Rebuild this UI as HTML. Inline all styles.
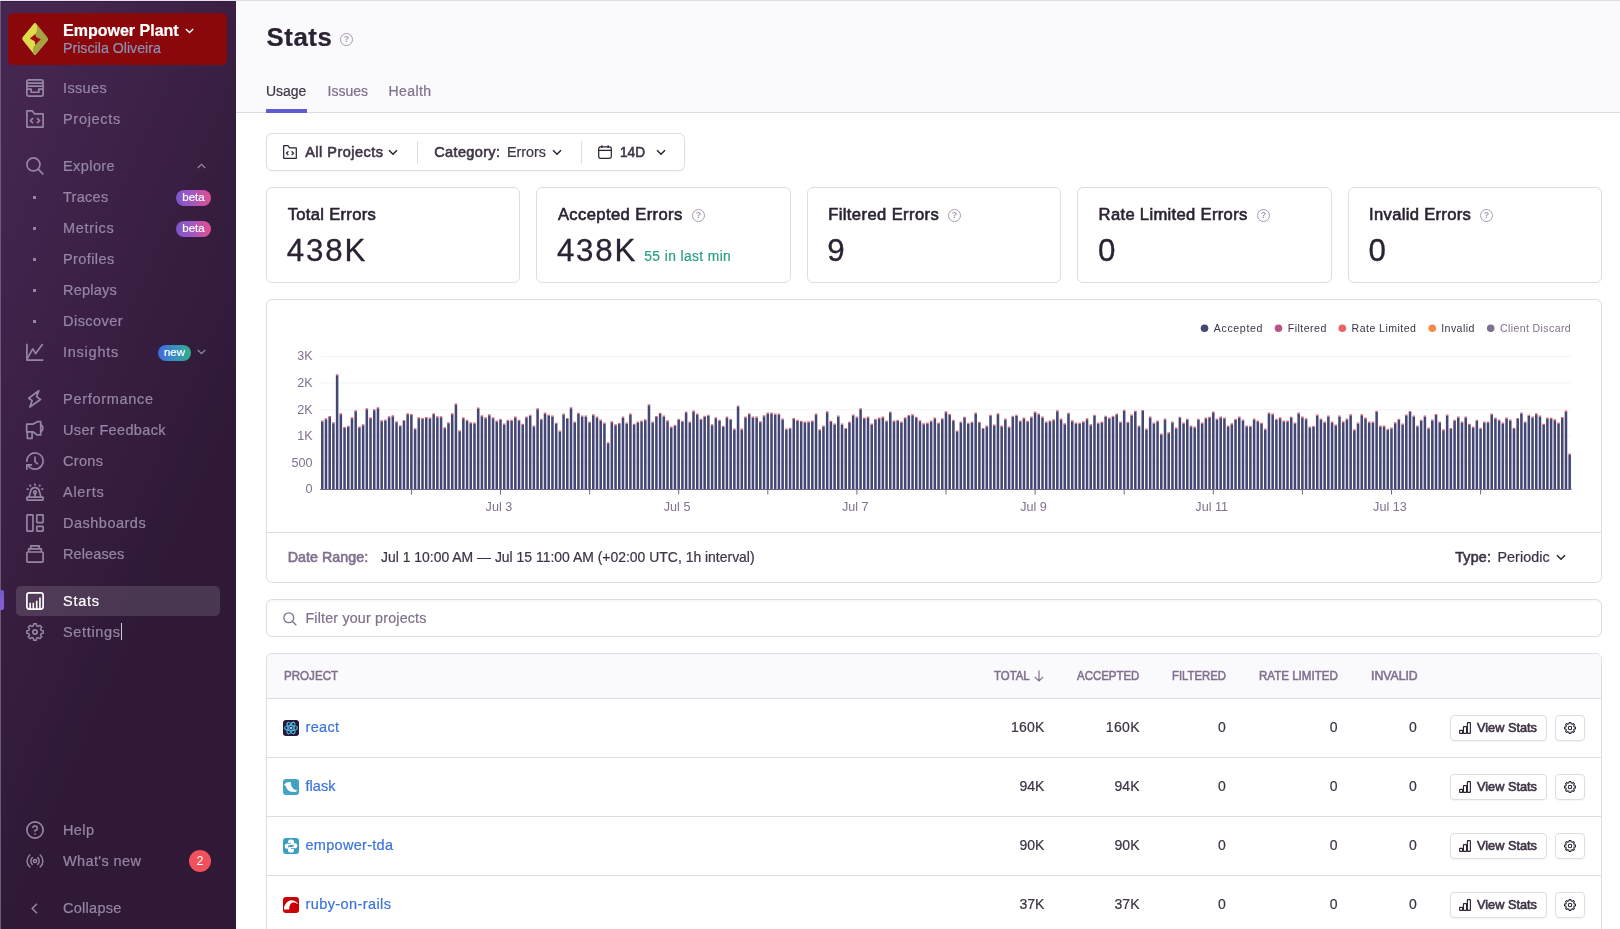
<!DOCTYPE html>
<html lang="en">
<head>
<meta charset="utf-8">
<title>Stats — Empower Plant — Sentry</title>
<style>
*{box-sizing:border-box;margin:0;padding:0}
html,body{width:1620px;height:929px;overflow:hidden;background:#fff}
body{font-family:"Liberation Sans",sans-serif;color:#3e3446;font-size:15px;position:relative;-webkit-font-smoothing:antialiased}
a{text-decoration:none;color:inherit}
#main,#sidebar{will-change:transform}
.abs{position:absolute}
.t{position:absolute;white-space:nowrap;line-height:1;transform-origin:0 50%}
svg{display:block;overflow:visible}
/* sidebar */
#sidebar{position:absolute;left:0;top:0;width:236px;height:929px;background:linear-gradient(294.17deg,#2f1937 35.57%,#452650 92.42%);color:#9586a5}
#sidebar .edge{position:absolute;left:0;top:0;width:1px;height:929px;background:#6d5a7a}
#sidebar .org{position:absolute;left:8px;top:13px;width:219px;height:52px;border-radius:5px;background:#8a080b}
#sidebar .item{position:absolute;left:16px;width:204px;height:30px}
#sidebar .item .ic{position:absolute;left:10px;top:6px;width:18px;height:18px;color:#9586a5}
#sidebar .item .lb{position:absolute;left:47px;top:0;height:30px;line-height:30px;font-size:15px;white-space:nowrap;color:#9586a5}
#sidebar .item.active{background:rgba(255,255,255,.13);border-radius:5px}
#sidebar .item.active .lb,#sidebar .item.active .ic{color:#fff}
#sidebar .dot{position:absolute;left:17px;top:14px;width:3px;height:3px;background:#9586a5}
.badge{position:absolute;height:16px;border-radius:8px;color:#fff;font-size:11.5px;line-height:15px;text-align:center;-webkit-text-stroke:.2px #fff}
.beta{left:160px;top:8px;width:35px;background:linear-gradient(90deg,#7b56cc 0%,#a058c0 45%,#e1508f 100%)}
.new{left:142px;top:8px;width:33px;background:linear-gradient(90deg,#3e6ae0 0%,#3a8fc0 50%,#33ad8b 100%)}
/* main */
#main{position:absolute;left:236px;top:0;width:1384px;height:929px;background:#fff}
#header{position:absolute;left:0;top:0;width:1384px;height:113px;background:#faf9fb;border-top:1px solid #e0dce5;border-bottom:1px solid #e0dce5}
.panel{position:absolute;background:#fff;border:1px solid #e0dce5;border-radius:6px}
.sub{color:#80708f}
.q{position:absolute;width:13px;height:13px;border:1px solid #a79bb3;border-radius:50%;color:#a79bb3;font-size:9px;line-height:11px;text-align:center;font-weight:bold}
.num{position:absolute;text-align:right;font-size:15px;line-height:1;white-space:nowrap;color:#3e3446}
.th{position:absolute;font-size:12px;font-weight:normal;-webkit-text-stroke:.55px #80708f;color:#80708f;line-height:1;white-space:nowrap;text-align:right}
.btn{position:absolute;height:26px;border:1px solid #e0dce5;border-radius:4px;background:#fff;box-shadow:0 1px 1px rgba(43,34,51,.04)}
/*thick*/.t,.num,#sidebar .item .lb{-webkit-text-stroke:.22px currentColor}
.link{color:#3c74dd}
.sb{font-weight:normal!important;-webkit-text-stroke:.6px currentColor}
#s_issues{letter-spacing:0.36px!important;font-size:14.5px!important;}
#s_projects{letter-spacing:0.69px!important;font-size:14.5px!important;}
#s_explore{letter-spacing:0.42px!important;font-size:14.5px!important;}
#s_traces{letter-spacing:0.28px!important;font-size:14.5px!important;}
#s_metrics{letter-spacing:0.66px!important;font-size:14.5px!important;}
#s_profiles{letter-spacing:0.41px!important;font-size:14.5px!important;}
#s_replays{letter-spacing:0.22px!important;font-size:14.5px!important;}
#s_discover{letter-spacing:0.47px!important;font-size:14.5px!important;}
#s_insights{letter-spacing:0.75px!important;font-size:14.5px!important;}
#s_performance{letter-spacing:0.71px!important;font-size:14.5px!important;}
#s_userfeedback{letter-spacing:0.35px!important;font-size:14.5px!important;}
#s_crons{letter-spacing:0.33px!important;font-size:14.5px!important;}
#s_alerts{letter-spacing:0.72px!important;font-size:14.5px!important;}
#s_dashboards{letter-spacing:0.50px!important;font-size:14.5px!important;}
#s_releases{letter-spacing:0.12px!important;font-size:14.5px!important;}
#s_stats{letter-spacing:0.76px!important;font-size:14.5px!important;}
#s_settings{letter-spacing:0.66px!important;font-size:14.5px!important;}
#s_help{letter-spacing:0.39px!important;font-size:14.5px!important;}
#s_whatsnew{letter-spacing:0.38px!important;font-size:14.5px!important;}
#s_collapse{letter-spacing:0.27px!important;font-size:14.5px!important;}
#orgname{letter-spacing:0!important;transform:scaleX(0.9706);transform-origin:0 50%;font-size:16.5px!important;left:55.3px!important;top:9.3px!important;right:auto!important;}
#username{letter-spacing:0!important;transform:scaleX(0.9798);transform-origin:0 50%;font-size:14.5px!important;left:55.3px!important;top:28.2px!important;right:auto!important;}
#title{letter-spacing:0.60px!important;font-size:25.8px!important;left:30.4px!important;top:23.9px!important;right:auto!important;}
#tab1{letter-spacing:0!important;transform:scaleX(0.9958);transform-origin:0 50%;font-size:14px!important;left:30.4px!important;top:83.1px!important;right:auto!important;}
#tab2{letter-spacing:0.01px!important;font-size:14px!important;left:91.6px!important;top:83.1px!important;right:auto!important;}
#tab3{letter-spacing:0.41px!important;font-size:14px!important;left:152.6px!important;top:83.1px!important;right:auto!important;}
#f1{letter-spacing:0.48px!important;font-size:14.5px!important;left:38.2px!important;top:11.0px!important;right:auto!important;}
#f2{letter-spacing:0.35px!important;font-size:14.5px!important;left:167.3px!important;top:11.0px!important;right:auto!important;}
#f3{letter-spacing:0!important;transform:scaleX(0.9852);transform-origin:0 50%;font-size:14.5px!important;left:239.5px!important;top:11.0px!important;right:auto!important;}
#f4{letter-spacing:0!important;transform:scaleX(0.9395);transform-origin:0 50%;font-size:14.5px!important;left:352.8px!important;top:11.0px!important;right:auto!important;}
#c1{letter-spacing:0.30px!important;font-size:16.6px!important;left:20.7px!important;top:18.6px!important;right:auto!important;}
#c2{letter-spacing:0.39px!important;font-size:16.6px!important;left:20.9px!important;top:18.6px!important;right:auto!important;}
#c3{letter-spacing:0.39px!important;font-size:16.6px!important;left:20.2px!important;top:18.6px!important;right:auto!important;}
#c4{letter-spacing:0.32px!important;font-size:16.6px!important;left:20.6px!important;top:18.6px!important;right:auto!important;}
#c5{letter-spacing:0.31px!important;font-size:16.6px!important;left:20.1px!important;top:18.6px!important;right:auto!important;}
#v1{letter-spacing:1.90px!important;font-size:31.3px!important;left:19.7px!important;top:46.8px!important;right:auto!important;}
#v2{letter-spacing:1.80px!important;font-size:31.3px!important;left:19.9px!important;top:46.8px!important;right:auto!important;}
#v3{letter-spacing:1.39px!important;font-size:31.3px!important;left:19.2px!important;top:46.8px!important;right:auto!important;}
#v4{letter-spacing:2.59px!important;font-size:31.3px!important;left:20.0px!important;top:46.8px!important;right:auto!important;}
#v5{letter-spacing:2.59px!important;font-size:31.3px!important;left:19.5px!important;top:46.8px!important;right:auto!important;}
#v2b{letter-spacing:0.40px!important;font-size:13.8px!important;left:107.3px!important;top:61.6px!important;right:auto!important;}
#dr1{letter-spacing:0.02px!important;font-size:14.3px!important;left:51.7px!important;top:550.0px!important;right:auto!important;}
#dr2{letter-spacing:0!important;transform:scaleX(0.9750);transform-origin:0 50%;font-size:14.3px!important;left:144.8px!important;top:550.0px!important;right:auto!important;}
#ty1{letter-spacing:0.21px!important;font-size:14.3px!important;left:1219.2px!important;top:550.0px!important;right:auto!important;}
#ty2{letter-spacing:0.06px!important;font-size:14.3px!important;left:1261.5px!important;top:550.0px!important;right:auto!important;}
#sr{letter-spacing:0.18px!important;font-size:14.3px!important;left:38.4px!important;top:10.5px!important;right:auto!important;}
#h0{letter-spacing:0!important;transform:scaleX(0.9355);transform-origin:0 50%;font-size:12.4px!important;left:47.5px!important;top:669.5px!important;right:auto!important;}
#h1{letter-spacing:0!important;transform:scaleX(0.9202);transform-origin:0 50%;font-size:12.4px!important;left:757.7px!important;top:669.5px!important;right:auto!important;}
#h2{letter-spacing:0!important;transform:scaleX(0.9232);transform-origin:0 50%;font-size:12.4px!important;left:841.0px!important;top:669.5px!important;right:auto!important;}
#h3{letter-spacing:0!important;transform:scaleX(0.9138);transform-origin:0 50%;font-size:12.4px!important;left:936.4px!important;top:669.5px!important;right:auto!important;}
#h4{letter-spacing:0!important;transform:scaleX(0.9331);transform-origin:0 50%;font-size:12.4px!important;left:1023.2px!important;top:669.5px!important;right:auto!important;}
#h5{letter-spacing:0!important;transform:scaleX(0.9877);transform-origin:0 50%;font-size:12.4px!important;left:1134.9px!important;top:669.5px!important;right:auto!important;}
#p0{letter-spacing:0.34px!important;font-size:14.5px!important;left:69.5px!important;top:720.1px!important;right:auto!important;}
#p1{letter-spacing:0.04px!important;font-size:14.5px!important;left:69.5px!important;top:779.1px!important;right:auto!important;}
#p2{letter-spacing:0.29px!important;font-size:14.5px!important;left:69.5px!important;top:838.1px!important;right:auto!important;}
#p3{letter-spacing:0.41px!important;font-size:14.5px!important;left:69.5px!important;top:897.1px!important;right:auto!important;}
#n1{letter-spacing:0.23px!important;font-size:14px!important;left:775.0px!important;top:720.0px!important;right:auto!important;}
#n2{letter-spacing:0.33px!important;font-size:14px!important;left:869.8px!important;top:720.0px!important;right:auto!important;}
#n3{letter-spacing:0.80px!important;font-size:14px!important;left:982.0px!important;top:720.0px!important;right:auto!important;}
#n4{letter-spacing:0.80px!important;font-size:14px!important;left:1093.8px!important;top:720.0px!important;right:auto!important;}
#n5{letter-spacing:0.80px!important;font-size:14px!important;left:1172.9px!important;top:720.0px!important;right:auto!important;}
#vs1{letter-spacing:0!important;transform:scaleX(0.9961);transform-origin:0 50%;font-size:12.8px!important;left:26.4px!important;top:5.8px!important;right:auto!important;}
#n6{letter-spacing:0.04px!important;font-size:14px!important;left:783.4px!important;top:779.0px!important;right:auto!important;}
#n7{letter-spacing:0.04px!important;font-size:14px!important;left:878.5px!important;top:779.0px!important;right:auto!important;}
#n8{letter-spacing:0.80px!important;font-size:14px!important;left:982.0px!important;top:779.0px!important;right:auto!important;}
#n9{letter-spacing:0.80px!important;font-size:14px!important;left:1093.8px!important;top:779.0px!important;right:auto!important;}
#n10{letter-spacing:0.80px!important;font-size:14px!important;left:1172.9px!important;top:779.0px!important;right:auto!important;}
#vs2{letter-spacing:0!important;transform:scaleX(0.9961);transform-origin:0 50%;font-size:12.8px!important;left:26.4px!important;top:5.8px!important;right:auto!important;}
#n11{letter-spacing:0.04px!important;font-size:14px!important;left:783.4px!important;top:838.0px!important;right:auto!important;}
#n12{letter-spacing:0.04px!important;font-size:14px!important;left:878.5px!important;top:838.0px!important;right:auto!important;}
#n13{letter-spacing:0.80px!important;font-size:14px!important;left:982.0px!important;top:838.0px!important;right:auto!important;}
#n14{letter-spacing:0.80px!important;font-size:14px!important;left:1093.8px!important;top:838.0px!important;right:auto!important;}
#n15{letter-spacing:0.80px!important;font-size:14px!important;left:1172.9px!important;top:838.0px!important;right:auto!important;}
#vs3{letter-spacing:0!important;transform:scaleX(0.9961);transform-origin:0 50%;font-size:12.8px!important;left:26.4px!important;top:5.8px!important;right:auto!important;}
#n16{letter-spacing:0.04px!important;font-size:14px!important;left:783.4px!important;top:897.0px!important;right:auto!important;}
#n17{letter-spacing:0.04px!important;font-size:14px!important;left:878.5px!important;top:897.0px!important;right:auto!important;}
#n18{letter-spacing:0.80px!important;font-size:14px!important;left:982.0px!important;top:897.0px!important;right:auto!important;}
#n19{letter-spacing:0.80px!important;font-size:14px!important;left:1093.8px!important;top:897.0px!important;right:auto!important;}
#n20{letter-spacing:0.80px!important;font-size:14px!important;left:1172.9px!important;top:897.0px!important;right:auto!important;}
#vs4{letter-spacing:0!important;transform:scaleX(0.9961);transform-origin:0 50%;font-size:12.8px!important;left:26.4px!important;top:5.8px!important;right:auto!important;}

</style>
</head>
<body>
<nav id="sidebar">
  <div class="edge"></div>
  <div class="abs" style="left:0;top:0;width:236px;height:1px;background:#e6e2ea"></div>
  <div class="abs" style="left:1px;top:1px;width:235px;height:1px;background:#3a1b48"></div>
  <div class="org">
    <svg class="abs" style="left:6px;top:3px" width="50" height="46" viewBox="0 0 50 46"><clipPath id="lg"><path d="M20.22 7.34Q21.04 6.37 21.85 7.39L33.17 21.59Q34.52 23.28 33.17 24.90L21.85 38.45Q21.04 39.42 20.22 38.41L8.82 24.20Q7.46 22.51 8.82 20.90Z"/></clipPath><path d="M20.22 7.34Q21.04 6.37 21.85 7.39L33.17 21.59Q34.52 23.28 33.17 24.90L21.85 38.45Q21.04 39.42 20.22 38.41L8.82 24.20Q7.46 22.51 8.82 20.90Z" fill="#dfdc4b"/><path d="M23.02 8.42L36.63 19.80L36.63 27.72L21.04 41.58L19.06 37.62L19.06 31.68L21.29 28.96L26.98 23.27L22.28 21.04L21.29 18.07L23.02 14.85Z" fill="#a4a444" clip-path="url(#lg)"/><path d="M21.29 18.07L15.84 22.52L20.69 25.15L21.29 28.96L26.98 23.27L22.28 21.04Z" fill="#a20c10"/></svg>
    <span class="t" id="orgname" style="left:55px;top:9px;font-size:16.5px;font-weight:bold;color:#fff">Empower Plant</span>
    <svg class="abs" style="left:177px;top:15px" width="9" height="6" viewBox="0 0 9 6"><path d="M0.8 1 L4.5 4.6 L8.2 1" fill="none" stroke="#fff" stroke-width="1.4"/></svg>
    <span class="t" id="username" style="left:55px;top:28px;font-size:14.5px;color:#8d90b5">Priscila Oliveira</span>
  </div>

  <a class="item" style="top:73px"><svg class="ic" viewBox="0 0 16 16" fill="none" stroke="currentColor" stroke-width="1.5" stroke-linejoin="round"><rect x=".8" y=".8" width="14.4" height="14.4" rx="1.6"/><path d="M.8 3.6H15.2M.8 6.3H15.2M.8 9H4.6V11.8H11.4V9H15.2"/></svg><span class="lb" id="s_issues">Issues</span></a>
  <a class="item" style="top:104px"><svg class="ic" viewBox="0 0 16 16" fill="none" stroke="currentColor" stroke-width="1.5" stroke-linejoin="round"><path d="M.8 15.2V.8H5.6L7.6 3.4H15.2V15.2Z"/><path d="M6.2 7.2L4 9.4L6.2 11.6M9.8 7.2L12 9.4L9.8 11.6"/></svg><span class="lb" id="s_projects">Projects</span></a>

  <a class="item" style="top:151px"><svg class="ic" viewBox="0 0 16 16" fill="none" stroke="currentColor" stroke-width="1.5"><circle cx="6.6" cy="6.6" r="5.8"/><path d="M10.8 10.8L15.4 15.4"/></svg><span class="lb" id="s_explore">Explore</span>
    <svg class="abs" style="left:181px;top:12px" width="9" height="6" viewBox="0 0 9 6"><path d="M0.8 5 L4.5 1.4 L8.2 5" fill="none" stroke="#9586a5" stroke-width="1.3"/></svg></a>
  <a class="item" style="top:182px"><i class="dot"></i><span class="lb" id="s_traces">Traces</span><span class="badge beta">beta</span></a>
  <a class="item" style="top:213px"><i class="dot"></i><span class="lb" id="s_metrics">Metrics</span><span class="badge beta">beta</span></a>
  <a class="item" style="top:244px"><i class="dot"></i><span class="lb" id="s_profiles">Profiles</span></a>
  <a class="item" style="top:275px"><i class="dot"></i><span class="lb" id="s_replays">Replays</span></a>
  <a class="item" style="top:306px"><i class="dot"></i><span class="lb" id="s_discover">Discover</span></a>
  <a class="item" style="top:337px"><svg class="ic" viewBox="0 0 16 16" fill="none" stroke="currentColor" stroke-width="1.5" stroke-linejoin="round"><path d="M.8 .6V15.2H15.4"/><path d="M1 14L6 5.2L8.6 9.4L14.8 .8"/></svg><span class="lb" id="s_insights">Insights</span><span class="badge new">new</span>
    <svg class="abs" style="left:181px;top:12px" width="9" height="6" viewBox="0 0 9 6"><path d="M0.8 1 L4.5 4.6 L8.2 1" fill="none" stroke="#9586a5" stroke-width="1.3"/></svg></a>

  <a class="item" style="top:384px"><svg class="ic" viewBox="0 0 16 16" fill="none" stroke="currentColor" stroke-width="1.5" stroke-linejoin="round"><path d="M11.4 .7L2.4 7.3L5.5 9.4L3.4 15.1L12.9 8.4L9.4 5.9Z"/></svg><span class="lb" id="s_performance">Performance</span></a>
  <a class="item" style="top:415px"><svg class="ic" viewBox="0 0 16 16" fill="none" stroke="currentColor" stroke-width="1.5" stroke-linejoin="round"><path d="M.6 2.8H6.1L10 .6H13.1V12.4H10L6.1 9.6H.6Z"/><path d="M1.2 9.6V15.4H5.4V9.6"/><path d="M13.1 3.6A3 3 0 0 1 13.1 9.2C15.6 8.4 15.6 4.4 13.1 3.6"/></svg><span class="lb" id="s_userfeedback">User Feedback</span></a>
  <a class="item" style="top:446px"><svg class="ic" viewBox="0 0 16 16" fill="none" stroke="currentColor" stroke-width="1.5" stroke-linejoin="round"><path d="M.84 8.8A7.2 7.2 0 1 1 1.65 11.4"/><path d="M5.4 11.4H.7V15.8"/><path d="M8 4V8.6L10.6 10.8"/></svg><span class="lb" id="s_crons">Crons</span></a>
  <a class="item" style="top:477px"><svg class="ic" viewBox="0 0 16 16" fill="none" stroke="currentColor" stroke-width="1.5" stroke-linejoin="round"><rect x=".8" y="12.6" width="14.4" height="2.6" rx=".5"/><path d="M2.6 12.6L4.2 7.2A3.9 3.9 0 0 1 11.8 7.2L13.4 12.6"/><circle cx="8" cy="8.2" r="1.2"/><path d="M8 9.4V12.4M8 .4V2.4M3.2 1.6L4.4 3.2M12.8 1.6L11.6 3.2M.6 5.4H2.4M13.6 5.4H15.4"/></svg><span class="lb" id="s_alerts">Alerts</span></a>
  <a class="item" style="top:508px"><svg class="ic" viewBox="0 0 16 16" fill="none" stroke="currentColor" stroke-width="1.5" stroke-linejoin="round"><rect x=".8" y=".8" width="5.4" height="14.4" rx=".5"/><rect x="9.6" y=".8" width="5.6" height="6.8" rx=".5"/><rect x="9.6" y="11" width="5.6" height="4.2" rx=".5"/></svg><span class="lb" id="s_dashboards">Dashboards</span></a>
  <a class="item" style="top:539px"><svg class="ic" viewBox="0 0 16 16" fill="none" stroke="currentColor" stroke-width="1.5" stroke-linejoin="round"><rect x=".8" y="6.2" width="14.4" height="9" rx="1"/><path d="M2.4 6.2V3.4H13.6V6.2M4.2 3.4V.8H11.8V3.4"/></svg><span class="lb" id="s_releases">Releases</span></a>

  <div class="abs" style="left:0;top:590px;width:4px;height:20px;background:linear-gradient(180deg,#6c5fc7,#8e5bd6);border-radius:0 2px 2px 0"></div>
  <a class="item active" style="top:586px"><svg class="ic" viewBox="0 0 16 16" fill="none" stroke="currentColor" stroke-width="1.5" stroke-linejoin="round"><rect x=".8" y=".8" width="14.4" height="14.4" rx="2"/><path d="M3.7 15V9.6M6.5 15V9.6M9.5 15V7.8M12.4 15V4.9" stroke-width="1.45"/></svg><span class="lb" id="s_stats">Stats</span></a>
  <a class="item" style="top:617px"><svg class="ic" viewBox="0 0 16 16" fill="none" stroke="currentColor" stroke-width="1.3" stroke-linejoin="round"><path d="M13.53 6.63 L15.30 6.79 L15.30 9.21 L13.53 9.37 L12.88 10.94 L14.02 12.30 L12.30 14.02 L10.94 12.88 L9.37 13.53 L9.21 15.30 L6.79 15.30 L6.63 13.53 L5.06 12.88 L3.70 14.02 L1.98 12.30 L3.12 10.94 L2.47 9.37 L0.70 9.21 L0.70 6.79 L2.47 6.63 L3.12 5.06 L1.98 3.70 L3.70 1.98 L5.06 3.12 L6.63 2.47 L6.79 0.70 L9.21 0.70 L9.37 2.47 L10.94 3.12 L12.30 1.98 L14.02 3.70 L12.88 5.06 Z"/><circle cx="8" cy="8" r="1.9" stroke-width="1.5"/></svg><span class="lb" id="s_settings">Settings</span><i class="abs" style="left:105px;top:6px;width:1px;height:17px;background:#cfc6da"></i></a>

  <a class="item" style="top:815px"><svg class="ic" viewBox="0 0 16 16" fill="none" stroke="currentColor" stroke-width="1.5"><circle cx="8" cy="8" r="7.2"/><path d="M6 6.3A2 2 0 1 1 8 8.4V9.6" stroke-width="1.3"/><circle cx="8" cy="11.6" r=".5" fill="currentColor" stroke-width=".6"/></svg><span class="lb" id="s_help">Help</span></a>
  <a class="item" style="top:846px"><svg class="ic" viewBox="0 0 16 16" fill="none" stroke="currentColor" stroke-width="1.3" stroke-linecap="round"><circle cx="8" cy="8" r="1.4"/><path d="M5.6 5A4 4 0 0 0 5.6 11M10.4 5A4 4 0 0 1 10.4 11M3.4 2.6A7.2 7.2 0 0 0 3.4 13.4M12.6 2.6A7.2 7.2 0 0 1 12.6 13.4"/></svg><span class="lb" id="s_whatsnew">What's new</span>
    <span class="abs" style="left:173px;top:4px;width:22px;height:22px;border-radius:50%;background:#f1515c;color:#fff;font-size:12.5px;line-height:22px;text-align:center">2</span></a>
  <a class="item" style="top:893px"><svg class="abs" style="left:15px;top:10px" width="7" height="11" viewBox="0 0 7 11"><path d="M6 .8L1.2 5.5L6 10.2" fill="none" stroke="#9586a5" stroke-width="1.5"/></svg><span class="lb" id="s_collapse">Collapse</span></a>
</nav>
<main id="main">
  <header id="header">
    <h1 class="t" id="title" style="left:30px;top:23px;font-size:26px;font-weight:bold;color:#2b2233;letter-spacing:.4px">Stats</h1>
    <span class="q" style="left:104px;top:32px">?</span>
    <span class="t" id="tab1" style="left:30px;top:83px;font-size:15px;color:#3e3446">Usage</span>
    <span class="t sub" id="tab2" style="left:91px;top:83px;font-size:15px">Issues</span>
    <span class="t sub" id="tab3" style="left:152px;top:83px;font-size:15px">Health</span>
    <div class="abs" style="left:30px;top:108px;width:41px;height:4px;background:#5f5bd3"></div>
  </header>

  <!-- page filters -->
  <div class="panel" style="left:30px;top:133px;width:419px;height:38px;box-shadow:0 1px 2px rgba(43,34,51,.04)">
    <svg class="abs" style="left:16px;top:11px" width="14" height="14" viewBox="0 0 16 16" fill="none" stroke="#2b2233" stroke-width="1.4" stroke-linejoin="round"><path d="M.8 15.2V.8H5.6L7.6 3.4H15.2V15.2Z"/><path d="M6.2 7.2L4 9.4L6.2 11.6M9.8 7.2L12 9.4L9.8 11.6"/></svg>
    <span class="t sb" id="f1" style="left:38px;top:11px;font-size:15px;font-weight:bold">All Projects</span>
    <svg class="abs" style="left:121px;top:15px" width="10" height="7" viewBox="0 0 10 7"><path d="M1 1.2L5 5.2L9 1.2" fill="none" stroke="#2b2233" stroke-width="1.5"/></svg>
    <i class="abs" style="left:150px;top:7px;width:1px;height:23px;background:#e0dce5"></i>
    <span class="t sb" id="f2" style="left:167px;top:11px;font-size:15px;font-weight:bold">Category:</span>
    <span class="t" id="f3" style="left:239px;top:11px;font-size:15px">Errors</span>
    <svg class="abs" style="left:285px;top:15px" width="10" height="7" viewBox="0 0 10 7"><path d="M1 1.2L5 5.2L9 1.2" fill="none" stroke="#2b2233" stroke-width="1.5"/></svg>
    <i class="abs" style="left:314px;top:7px;width:1px;height:23px;background:#e0dce5"></i>
    <svg class="abs" style="left:331px;top:11px" width="14" height="14" viewBox="0 0 16 16" fill="none" stroke="#2b2233" stroke-width="1.4" stroke-linejoin="round"><rect x=".8" y="2.2" width="14.4" height="13" rx="2"/><path d="M.8 6.2H15.2M4.4 .4V3.4M11.6 .4V3.4"/></svg>
    <span class="t sb" id="f4" style="left:353px;top:11px;font-size:15px;font-weight:bold">14D</span>
    <svg class="abs" style="left:389px;top:15px" width="10" height="7" viewBox="0 0 10 7"><path d="M1 1.2L5 5.2L9 1.2" fill="none" stroke="#2b2233" stroke-width="1.5"/></svg>
  </div>

  <!-- score cards -->
  <section class="panel" style="left:30px;top:187px;width:254px;height:96px">
    <span class="t sb" id="c1" style="color:#2b2233;left:20px;top:19px;font-size:16.5px;font-weight:bold">Total Errors</span>
    <span class="t" id="v1" style="color:#2b2233;-webkit-text-stroke:.3px #2b2233;left:19px;top:46px;font-size:32px;letter-spacing:1px">438K</span>
  </section>
  <section class="panel" style="left:300px;top:187px;width:255px;height:96px">
    <span class="t sb" id="c2" style="color:#2b2233;left:20px;top:19px;font-size:16.5px;font-weight:bold">Accepted Errors</span>
    <span class="q" style="left:155px;top:21px">?</span>
    <span class="t" id="v2" style="color:#2b2233;-webkit-text-stroke:.3px #2b2233;left:19px;top:46px;font-size:32px;letter-spacing:1px">438K</span>
    <span class="t" id="v2b" style="left:107px;top:62px;font-size:14.5px;color:#2ba185">55 in last min</span>
  </section>
  <section class="panel" style="left:571px;top:187px;width:254px;height:96px">
    <span class="t sb" id="c3" style="color:#2b2233;left:20px;top:19px;font-size:16.5px;font-weight:bold">Filtered Errors</span>
    <span class="q" style="left:140px;top:21px">?</span>
    <span class="t" id="v3" style="color:#2b2233;-webkit-text-stroke:.3px #2b2233;left:19px;top:46px;font-size:32px">9</span>
  </section>
  <section class="panel" style="left:841px;top:187px;width:255px;height:96px">
    <span class="t sb" id="c4" style="color:#2b2233;left:20px;top:19px;font-size:16.5px;font-weight:bold">Rate Limited Errors</span>
    <span class="q" style="left:179px;top:21px">?</span>
    <span class="t" id="v4" style="color:#2b2233;-webkit-text-stroke:.3px #2b2233;left:19px;top:46px;font-size:32px">0</span>
  </section>
  <section class="panel" style="left:1112px;top:187px;width:254px;height:96px">
    <span class="t sb" id="c5" style="color:#2b2233;left:20px;top:19px;font-size:16.5px;font-weight:bold">Invalid Errors</span>
    <span class="q" style="left:131px;top:21px">?</span>
    <span class="t" id="v5" style="color:#2b2233;-webkit-text-stroke:.3px #2b2233;left:19px;top:46px;font-size:32px">0</span>
  </section>
  <!-- usage chart -->
  <section class="panel" style="left:30px;top:299px;width:1336px;height:284px"></section>
<svg class="abs" id="chart" style="left:30px;top:299px" width="1336" height="233" viewBox="0 0 1336 233" font-family="Liberation Sans, sans-serif">
<line x1="54.5" x2="1305.0" y1="163.9" y2="163.9" stroke="#f5f3f7" stroke-width="1"/>
<line x1="54.5" x2="1305.0" y1="137.3" y2="137.3" stroke="#f5f3f7" stroke-width="1"/>
<line x1="54.5" x2="1305.0" y1="110.7" y2="110.7" stroke="#f5f3f7" stroke-width="1"/>
<line x1="54.5" x2="1305.0" y1="84.1" y2="84.1" stroke="#f5f3f7" stroke-width="1"/>
<line x1="54.5" x2="1305.0" y1="57.5" y2="57.5" stroke="#f5f3f7" stroke-width="1"/>
<text x="46.6" y="194.3" text-anchor="end" font-size="12.6" fill="#80708f">0</text>
<text x="46.6" y="167.7" text-anchor="end" font-size="12.6" fill="#80708f">500</text>
<text x="46.6" y="141.1" text-anchor="end" font-size="12.6" fill="#80708f">1K</text>
<text x="46.6" y="114.5" text-anchor="end" font-size="12.6" fill="#80708f">2K</text>
<text x="46.6" y="87.9" text-anchor="end" font-size="12.6" fill="#80708f">2K</text>
<text x="46.6" y="61.3" text-anchor="end" font-size="12.6" fill="#80708f">3K</text>
<path d="M55.00 190.50V122.56h2.55V190.50ZM58.71 190.50V120.24h2.55V190.50ZM62.42 190.50V118.11h2.55V190.50ZM66.14 190.50V124.22h2.55V190.50ZM69.85 190.50V76.26h2.55V190.50ZM73.56 190.50V115.15h2.55V190.50ZM77.28 190.50V129.04h2.55V190.50ZM80.99 190.50V127.65h2.55V190.50ZM84.70 190.50V119.31h2.55V190.50ZM88.41 190.50V112.37h2.55V190.50ZM92.12 190.50V128.58h2.55V190.50ZM95.84 190.50V126.26h2.55V190.50ZM99.55 190.50V110.33h2.55V190.50ZM103.26 190.50V119.31h2.55V190.50ZM106.97 190.50V111.26h2.55V190.50ZM110.69 190.50V109.32h2.55V190.50ZM114.40 190.50V122.28h2.55V190.50ZM118.11 190.50V121.45h2.55V190.50ZM121.83 190.50V118.21h2.55V190.50ZM125.54 190.50V117.28h2.55V190.50ZM129.25 190.50V123.20h2.55V190.50ZM132.96 190.50V127.19h2.55V190.50ZM136.68 190.50V122.09h2.55V190.50ZM140.39 190.50V115.15h2.55V190.50ZM144.10 190.50V116.07h2.55V190.50ZM147.81 190.50V130.24h2.55V190.50ZM151.52 190.50V119.31h2.55V190.50ZM155.24 190.50V120.06h2.55V190.50ZM158.95 190.50V119.04h2.55V190.50ZM162.66 190.50V119.50h2.55V190.50ZM166.38 190.50V115.15h2.55V190.50ZM170.09 190.50V118.21h2.55V190.50ZM173.80 190.50V118.21h2.55V190.50ZM177.51 190.50V129.22h2.55V190.50ZM181.22 190.50V124.22h2.55V190.50ZM184.94 190.50V115.33h2.55V190.50ZM188.65 190.50V105.43h2.55V190.50ZM192.36 190.50V132.28h2.55V190.50ZM196.07 190.50V119.31h2.55V190.50ZM199.79 190.50V121.63h2.55V190.50ZM203.50 190.50V124.13h2.55V190.50ZM207.21 190.50V124.59h2.55V190.50ZM210.92 190.50V109.59h2.55V190.50ZM214.64 190.50V117.28h2.55V190.50ZM218.35 190.50V119.31h2.55V190.50ZM222.06 190.50V116.26h2.55V190.50ZM225.78 190.50V119.31h2.55V190.50ZM229.49 190.50V122.56h2.55V190.50ZM233.20 190.50V120.70h2.55V190.50ZM236.91 190.50V125.52h2.55V190.50ZM240.62 190.50V121.63h2.55V190.50ZM244.34 190.50V121.63h2.55V190.50ZM248.05 190.50V118.57h2.55V190.50ZM251.76 190.50V121.81h2.55V190.50ZM255.47 190.50V125.80h2.55V190.50ZM259.19 190.50V118.39h2.55V190.50ZM262.90 190.50V116.72h2.55V190.50ZM266.61 190.50V127.46h2.55V190.50ZM270.32 190.50V110.33h2.55V190.50ZM274.04 190.50V120.70h2.55V190.50ZM277.75 190.50V114.41h2.55V190.50ZM281.46 190.50V116.81h2.55V190.50ZM285.17 190.50V117.46h2.55V190.50ZM288.89 190.50V124.87h2.55V190.50ZM292.60 190.50V132.46h2.55V190.50ZM296.31 190.50V115.42h2.55V190.50ZM300.02 190.50V119.96h2.55V190.50ZM303.74 190.50V109.13h2.55V190.50ZM307.45 190.50V123.48h2.55V190.50ZM311.16 190.50V114.68h2.55V190.50ZM314.88 190.50V117.46h2.55V190.50ZM318.59 190.50V117.46h2.55V190.50ZM322.30 190.50V123.48h2.55V190.50ZM326.01 190.50V116.26h2.55V190.50ZM329.72 190.50V118.39h2.55V190.50ZM333.44 190.50V121.45h2.55V190.50ZM337.15 190.50V124.41h2.55V190.50ZM340.86 190.50V144.32h2.55V190.50ZM344.57 190.50V123.30h2.55V190.50ZM348.29 190.50V126.26h2.55V190.50ZM352.00 190.50V125.05h2.55V190.50ZM355.71 190.50V118.39h2.55V190.50ZM359.43 190.50V124.41h2.55V190.50ZM363.14 190.50V115.42h2.55V190.50ZM366.85 190.50V125.80h2.55V190.50ZM370.56 190.50V123.48h2.55V190.50ZM374.27 190.50V122.56h2.55V190.50ZM377.99 190.50V121.16h2.55V190.50ZM381.70 190.50V106.35h2.55V190.50ZM385.41 190.50V123.48h2.55V190.50ZM389.12 190.50V117.92h2.55V190.50ZM392.84 190.50V114.87h2.55V190.50ZM396.55 190.50V117.46h2.55V190.50ZM400.26 190.50V122.37h2.55V190.50ZM403.97 190.50V128.58h2.55V190.50ZM407.69 190.50V126.72h2.55V190.50ZM411.40 190.50V120.70h2.55V190.50ZM415.11 190.50V122.74h2.55V190.50ZM418.82 190.50V113.48h2.55V190.50ZM422.54 190.50V123.48h2.55V190.50ZM426.25 190.50V112.56h2.55V190.50ZM429.96 190.50V115.42h2.55V190.50ZM433.68 190.50V120.70h2.55V190.50ZM437.39 190.50V117.74h2.55V190.50ZM441.10 190.50V116.72h2.55V190.50ZM444.81 190.50V126.26h2.55V190.50ZM448.52 190.50V119.13h2.55V190.50ZM452.24 190.50V121.63h2.55V190.50ZM455.95 190.50V127.65h2.55V190.50ZM459.66 190.50V118.39h2.55V190.50ZM463.38 190.50V120.70h2.55V190.50ZM467.09 190.50V130.43h2.55V190.50ZM470.80 190.50V107.47h2.55V190.50ZM474.51 190.50V130.43h2.55V190.50ZM478.22 190.50V118.39h2.55V190.50ZM481.94 190.50V115.33h2.55V190.50ZM485.65 190.50V118.57h2.55V190.50ZM489.36 190.50V118.39h2.55V190.50ZM493.07 190.50V123.30h2.55V190.50ZM496.79 190.50V117.28h2.55V190.50ZM500.50 190.50V114.41h2.55V190.50ZM504.21 190.50V114.41h2.55V190.50ZM507.93 190.50V115.42h2.55V190.50ZM511.64 190.50V115.42h2.55V190.50ZM515.35 190.50V120.52h2.55V190.50ZM519.06 190.50V130.43h2.55V190.50ZM522.77 190.50V129.69h2.55V190.50ZM526.49 190.50V120.06h2.55V190.50ZM530.20 190.50V121.63h2.55V190.50ZM533.91 190.50V122.83h2.55V190.50ZM537.62 190.50V123.48h2.55V190.50ZM541.34 190.50V123.30h2.55V190.50ZM545.05 190.50V122.56h2.55V190.50ZM548.76 190.50V115.42h2.55V190.50ZM552.47 190.50V131.35h2.55V190.50ZM556.19 190.50V127.46h2.55V190.50ZM559.90 190.50V113.30h2.55V190.50ZM563.61 190.50V122.83h2.55V190.50ZM567.32 190.50V125.52h2.55V190.50ZM571.04 190.50V117.46h2.55V190.50ZM574.75 190.50V125.52h2.55V190.50ZM578.46 190.50V129.96h2.55V190.50ZM582.17 190.50V123.48h2.55V190.50ZM585.89 190.50V116.54h2.55V190.50ZM589.60 190.50V118.39h2.55V190.50ZM593.31 190.50V110.33h2.55V190.50ZM597.02 190.50V119.59h2.55V190.50ZM600.74 190.50V118.39h2.55V190.50ZM604.45 190.50V125.52h2.55V190.50ZM608.16 190.50V120.70h2.55V190.50ZM611.88 190.50V119.59h2.55V190.50ZM615.59 190.50V118.57h2.55V190.50ZM619.30 190.50V122.56h2.55V190.50ZM623.01 190.50V113.48h2.55V190.50ZM626.73 190.50V122.56h2.55V190.50ZM630.44 190.50V121.63h2.55V190.50ZM634.15 190.50V123.48h2.55V190.50ZM637.86 190.50V119.31h2.55V190.50ZM641.57 190.50V117.00h2.55V190.50ZM645.29 190.50V116.26h2.55V190.50ZM649.00 190.50V118.85h2.55V190.50ZM652.71 190.50V122.37h2.55V190.50ZM656.42 190.50V125.34h2.55V190.50ZM660.14 190.50V124.59h2.55V190.50ZM663.85 190.50V122.56h2.55V190.50ZM667.56 190.50V119.59h2.55V190.50ZM671.27 190.50V124.59h2.55V190.50ZM674.99 190.50V120.24h2.55V190.50ZM678.70 190.50V113.30h2.55V190.50ZM682.41 190.50V116.07h2.55V190.50ZM686.12 190.50V121.63h2.55V190.50ZM689.84 190.50V132.55h2.55V190.50ZM693.55 190.50V123.48h2.55V190.50ZM697.26 190.50V118.85h2.55V190.50ZM700.98 190.50V124.69h2.55V190.50ZM704.69 190.50V123.48h2.55V190.50ZM708.40 190.50V114.41h2.55V190.50ZM712.11 190.50V123.66h2.55V190.50ZM715.82 190.50V129.96h2.55V190.50ZM719.54 190.50V127.46h2.55V190.50ZM723.25 190.50V116.72h2.55V190.50ZM726.96 190.50V126.54h2.55V190.50ZM730.67 190.50V115.33h2.55V190.50ZM734.39 190.50V127.46h2.55V190.50ZM738.10 190.50V120.52h2.55V190.50ZM741.81 190.50V128.58h2.55V190.50ZM745.52 190.50V117.74h2.55V190.50ZM749.24 190.50V116.72h2.55V190.50ZM752.95 190.50V122.56h2.55V190.50ZM756.66 190.50V119.59h2.55V190.50ZM760.38 190.50V122.83h2.55V190.50ZM764.09 190.50V118.39h2.55V190.50ZM767.80 190.50V113.57h2.55V190.50ZM771.51 190.50V115.42h2.55V190.50ZM775.23 190.50V118.39h2.55V190.50ZM778.94 190.50V123.48h2.55V190.50ZM782.65 190.50V122.56h2.55V190.50ZM786.36 190.50V121.16h2.55V190.50ZM790.07 190.50V112.37h2.55V190.50ZM793.79 190.50V120.52h2.55V190.50ZM797.50 190.50V125.34h2.55V190.50ZM801.21 190.50V114.68h2.55V190.50ZM804.92 190.50V122.28h2.55V190.50ZM808.64 190.50V124.41h2.55V190.50ZM812.35 190.50V124.87h2.55V190.50ZM816.06 190.50V123.30h2.55V190.50ZM819.77 190.50V120.24h2.55V190.50ZM823.49 190.50V126.26h2.55V190.50ZM827.20 190.50V116.72h2.55V190.50ZM830.91 190.50V124.41h2.55V190.50ZM834.62 190.50V123.48h2.55V190.50ZM838.34 190.50V117.65h2.55V190.50ZM842.05 190.50V119.59h2.55V190.50ZM845.76 190.50V117.74h2.55V190.50ZM849.48 190.50V115.42h2.55V190.50ZM853.19 190.50V123.48h2.55V190.50ZM856.90 190.50V111.63h2.55V190.50ZM860.61 190.50V123.66h2.55V190.50ZM864.32 190.50V116.54h2.55V190.50ZM868.04 190.50V112.83h2.55V190.50ZM871.75 190.50V127.46h2.55V190.50ZM875.46 190.50V111.91h2.55V190.50ZM879.17 190.50V130.43h2.55V190.50ZM882.89 190.50V118.39h2.55V190.50ZM886.60 190.50V124.41h2.55V190.50ZM890.31 190.50V122.56h2.55V190.50ZM894.02 190.50V135.52h2.55V190.50ZM897.74 190.50V120.52h2.55V190.50ZM901.45 190.50V134.13h2.55V190.50ZM905.16 190.50V123.48h2.55V190.50ZM908.88 190.50V129.50h2.55V190.50ZM912.59 190.50V118.67h2.55V190.50ZM916.30 190.50V124.59h2.55V190.50ZM920.01 190.50V120.70h2.55V190.50ZM923.73 190.50V127.46h2.55V190.50ZM927.44 190.50V128.39h2.55V190.50ZM931.15 190.50V120.70h2.55V190.50ZM934.86 190.50V124.59h2.55V190.50ZM938.57 190.50V119.59h2.55V190.50ZM942.29 190.50V118.85h2.55V190.50ZM946.00 190.50V113.57h2.55V190.50ZM949.71 190.50V120.42h2.55V190.50ZM953.42 190.50V118.39h2.55V190.50ZM957.14 190.50V119.59h2.55V190.50ZM960.85 190.50V127.46h2.55V190.50ZM964.56 190.50V125.34h2.55V190.50ZM968.27 190.50V120.70h2.55V190.50ZM971.99 190.50V118.39h2.55V190.50ZM975.70 190.50V121.45h2.55V190.50ZM979.41 190.50V127.46h2.55V190.50ZM983.12 190.50V127.65h2.55V190.50ZM986.84 190.50V120.52h2.55V190.50ZM990.55 190.50V122.56h2.55V190.50ZM994.26 190.50V124.87h2.55V190.50ZM997.98 190.50V130.43h2.55V190.50ZM1001.69 190.50V114.41h2.55V190.50ZM1005.40 190.50V115.42h2.55V190.50ZM1009.11 190.50V120.70h2.55V190.50ZM1012.82 190.50V119.31h2.55V190.50ZM1016.54 190.50V122.56h2.55V190.50ZM1020.25 190.50V122.56h2.55V190.50ZM1023.96 190.50V118.85h2.55V190.50ZM1027.67 190.50V124.59h2.55V190.50ZM1031.39 190.50V114.41h2.55V190.50ZM1035.10 190.50V118.57h2.55V190.50ZM1038.81 190.50V120.24h2.55V190.50ZM1042.53 190.50V128.39h2.55V190.50ZM1046.24 190.50V127.65h2.55V190.50ZM1049.95 190.50V116.54h2.55V190.50ZM1053.66 190.50V120.52h2.55V190.50ZM1057.38 190.50V123.48h2.55V190.50ZM1061.09 190.50V117.46h2.55V190.50ZM1064.80 190.50V123.48h2.55V190.50ZM1068.51 190.50V126.54h2.55V190.50ZM1072.22 190.50V117.46h2.55V190.50ZM1075.94 190.50V123.30h2.55V190.50ZM1079.65 190.50V120.42h2.55V190.50ZM1083.36 190.50V116.35h2.55V190.50ZM1087.08 190.50V131.35h2.55V190.50ZM1090.79 190.50V124.41h2.55V190.50ZM1094.50 190.50V116.35h2.55V190.50ZM1098.21 190.50V119.50h2.55V190.50ZM1101.92 190.50V123.48h2.55V190.50ZM1105.64 190.50V123.48h2.55V190.50ZM1109.35 190.50V112.65h2.55V190.50ZM1113.06 190.50V127.46h2.55V190.50ZM1116.77 190.50V127.46h2.55V190.50ZM1120.49 190.50V130.70h2.55V190.50ZM1124.20 190.50V129.50h2.55V190.50ZM1127.91 190.50V124.22h2.55V190.50ZM1131.62 190.50V120.70h2.55V190.50ZM1135.34 190.50V125.52h2.55V190.50ZM1139.05 190.50V116.54h2.55V190.50ZM1142.76 190.50V113.11h2.55V190.50ZM1146.47 190.50V117.46h2.55V190.50ZM1150.19 190.50V127.46h2.55V190.50ZM1153.90 190.50V121.63h2.55V190.50ZM1157.61 190.50V117.46h2.55V190.50ZM1161.33 190.50V129.50h2.55V190.50ZM1165.04 190.50V121.45h2.55V190.50ZM1168.75 190.50V116.07h2.55V190.50ZM1172.46 190.50V123.48h2.55V190.50ZM1176.17 190.50V131.35h2.55V190.50ZM1179.89 190.50V116.54h2.55V190.50ZM1183.60 190.50V129.96h2.55V190.50ZM1187.31 190.50V121.63h2.55V190.50ZM1191.02 190.50V118.39h2.55V190.50ZM1194.74 190.50V123.48h2.55V190.50ZM1198.45 190.50V118.39h2.55V190.50ZM1202.16 190.50V125.80h2.55V190.50ZM1205.88 190.50V128.39h2.55V190.50ZM1209.59 190.50V121.63h2.55V190.50ZM1213.30 190.50V129.69h2.55V190.50ZM1217.01 190.50V123.48h2.55V190.50ZM1220.72 190.50V123.48h2.55V190.50ZM1224.44 190.50V115.42h2.55V190.50ZM1228.15 190.50V119.50h2.55V190.50ZM1231.86 190.50V121.45h2.55V190.50ZM1235.58 190.50V124.59h2.55V190.50ZM1239.29 190.50V119.59h2.55V190.50ZM1243.00 190.50V121.45h2.55V190.50ZM1246.71 190.50V129.78h2.55V190.50ZM1250.42 190.50V119.96h2.55V190.50ZM1254.14 190.50V114.41h2.55V190.50ZM1257.85 190.50V123.48h2.55V190.50ZM1261.56 190.50V116.72h2.55V190.50ZM1265.27 190.50V118.39h2.55V190.50ZM1268.99 190.50V115.33h2.55V190.50ZM1272.70 190.50V117.46h2.55V190.50ZM1276.41 190.50V125.80h2.55V190.50ZM1280.12 190.50V119.50h2.55V190.50ZM1283.84 190.50V119.78h2.55V190.50ZM1287.55 190.50V121.16h2.55V190.50ZM1291.26 190.50V124.59h2.55V190.50ZM1294.97 190.50V119.04h2.55V190.50ZM1298.69 190.50V112.56h2.55V190.50ZM1302.40 190.50V155.48h2.55V190.50Z" fill="#444674"/>
<path d="M55.00 122.66v-1.1h2.55v1.1ZM58.71 120.34v-1.1h2.55v1.1ZM62.42 118.21v-1.1h2.55v1.1ZM66.14 124.32v-1.1h2.55v1.1ZM69.85 76.36v-1.1h2.55v1.1ZM73.56 115.25v-1.1h2.55v1.1ZM77.28 129.14v-1.1h2.55v1.1ZM80.99 127.75v-1.1h2.55v1.1ZM84.70 119.41v-1.1h2.55v1.1ZM88.41 112.47v-1.1h2.55v1.1ZM92.12 128.68v-1.1h2.55v1.1ZM95.84 126.36v-1.1h2.55v1.1ZM99.55 110.43v-1.1h2.55v1.1ZM103.26 119.41v-1.1h2.55v1.1ZM106.97 111.36v-1.1h2.55v1.1ZM110.69 109.42v-1.1h2.55v1.1ZM114.40 122.38v-1.1h2.55v1.1ZM118.11 121.55v-1.1h2.55v1.1ZM121.83 118.31v-1.1h2.55v1.1ZM125.54 117.38v-1.1h2.55v1.1ZM129.25 123.30v-1.1h2.55v1.1ZM132.96 127.29v-1.1h2.55v1.1ZM136.68 122.19v-1.1h2.55v1.1ZM140.39 115.25v-1.1h2.55v1.1ZM144.10 116.17v-1.1h2.55v1.1ZM147.81 130.34v-1.1h2.55v1.1ZM151.52 119.41v-1.1h2.55v1.1ZM155.24 120.16v-1.1h2.55v1.1ZM158.95 119.14v-1.1h2.55v1.1ZM162.66 119.60v-1.1h2.55v1.1ZM166.38 115.25v-1.1h2.55v1.1ZM170.09 118.31v-1.1h2.55v1.1ZM173.80 118.31v-1.1h2.55v1.1ZM177.51 129.32v-1.1h2.55v1.1ZM181.22 124.32v-1.1h2.55v1.1ZM184.94 115.43v-1.1h2.55v1.1ZM188.65 105.53v-1.1h2.55v1.1ZM192.36 132.38v-1.1h2.55v1.1ZM196.07 119.41v-1.1h2.55v1.1ZM199.79 121.73v-1.1h2.55v1.1ZM203.50 124.23v-1.1h2.55v1.1ZM207.21 124.69v-1.1h2.55v1.1ZM210.92 109.69v-1.1h2.55v1.1ZM214.64 117.38v-1.1h2.55v1.1ZM218.35 119.41v-1.1h2.55v1.1ZM222.06 116.36v-1.1h2.55v1.1ZM225.78 119.41v-1.1h2.55v1.1ZM229.49 122.66v-1.1h2.55v1.1ZM233.20 120.80v-1.1h2.55v1.1ZM236.91 125.62v-1.1h2.55v1.1ZM240.62 121.73v-1.1h2.55v1.1ZM244.34 121.73v-1.1h2.55v1.1ZM248.05 118.67v-1.1h2.55v1.1ZM251.76 121.91v-1.1h2.55v1.1ZM255.47 125.90v-1.1h2.55v1.1ZM259.19 118.49v-1.1h2.55v1.1ZM262.90 116.82v-1.1h2.55v1.1ZM266.61 127.56v-1.1h2.55v1.1ZM270.32 110.43v-1.1h2.55v1.1ZM274.04 120.80v-1.1h2.55v1.1ZM277.75 114.51v-1.1h2.55v1.1ZM281.46 116.91v-1.1h2.55v1.1ZM285.17 117.56v-1.1h2.55v1.1ZM288.89 124.97v-1.1h2.55v1.1ZM292.60 132.56v-1.1h2.55v1.1ZM296.31 115.52v-1.1h2.55v1.1ZM300.02 120.06v-1.1h2.55v1.1ZM303.74 109.23v-1.1h2.55v1.1ZM307.45 123.58v-1.1h2.55v1.1ZM311.16 114.78v-1.1h2.55v1.1ZM314.88 117.56v-1.1h2.55v1.1ZM318.59 117.56v-1.1h2.55v1.1ZM322.30 123.58v-1.1h2.55v1.1ZM326.01 116.36v-1.1h2.55v1.1ZM329.72 118.49v-1.1h2.55v1.1ZM333.44 121.55v-1.1h2.55v1.1ZM337.15 124.51v-1.1h2.55v1.1ZM340.86 144.42v-1.1h2.55v1.1ZM344.57 123.40v-1.1h2.55v1.1ZM348.29 126.36v-1.1h2.55v1.1ZM352.00 125.15v-1.1h2.55v1.1ZM355.71 118.49v-1.1h2.55v1.1ZM359.43 124.51v-1.1h2.55v1.1ZM363.14 115.52v-1.1h2.55v1.1ZM366.85 125.90v-1.1h2.55v1.1ZM370.56 123.58v-1.1h2.55v1.1ZM374.27 122.66v-1.1h2.55v1.1ZM377.99 121.26v-1.1h2.55v1.1ZM381.70 106.45v-1.1h2.55v1.1ZM385.41 123.58v-1.1h2.55v1.1ZM389.12 118.02v-1.1h2.55v1.1ZM392.84 114.97v-1.1h2.55v1.1ZM396.55 117.56v-1.1h2.55v1.1ZM400.26 122.47v-1.1h2.55v1.1ZM403.97 128.68v-1.1h2.55v1.1ZM407.69 126.82v-1.1h2.55v1.1ZM411.40 120.80v-1.1h2.55v1.1ZM415.11 122.84v-1.1h2.55v1.1ZM418.82 113.58v-1.1h2.55v1.1ZM422.54 123.58v-1.1h2.55v1.1ZM426.25 112.66v-1.1h2.55v1.1ZM429.96 115.52v-1.1h2.55v1.1ZM433.68 120.80v-1.1h2.55v1.1ZM437.39 117.84v-1.1h2.55v1.1ZM441.10 116.82v-1.1h2.55v1.1ZM444.81 126.36v-1.1h2.55v1.1ZM448.52 119.23v-1.1h2.55v1.1ZM452.24 121.73v-1.1h2.55v1.1ZM455.95 127.75v-1.1h2.55v1.1ZM459.66 118.49v-1.1h2.55v1.1ZM463.38 120.80v-1.1h2.55v1.1ZM467.09 130.53v-1.1h2.55v1.1ZM470.80 107.57v-1.1h2.55v1.1ZM474.51 130.53v-1.1h2.55v1.1ZM478.22 118.49v-1.1h2.55v1.1ZM481.94 115.43v-1.1h2.55v1.1ZM485.65 118.67v-1.1h2.55v1.1ZM489.36 118.49v-1.1h2.55v1.1ZM493.07 123.40v-1.1h2.55v1.1ZM496.79 117.38v-1.1h2.55v1.1ZM500.50 114.51v-1.1h2.55v1.1ZM504.21 114.51v-1.1h2.55v1.1ZM507.93 115.52v-1.1h2.55v1.1ZM511.64 115.52v-1.1h2.55v1.1ZM515.35 120.62v-1.1h2.55v1.1ZM519.06 130.53v-1.1h2.55v1.1ZM522.77 129.79v-1.1h2.55v1.1ZM526.49 120.16v-1.1h2.55v1.1ZM530.20 121.73v-1.1h2.55v1.1ZM533.91 122.93v-1.1h2.55v1.1ZM537.62 123.58v-1.1h2.55v1.1ZM541.34 123.40v-1.1h2.55v1.1ZM545.05 122.66v-1.1h2.55v1.1ZM548.76 115.52v-1.1h2.55v1.1ZM552.47 131.45v-1.1h2.55v1.1ZM556.19 127.56v-1.1h2.55v1.1ZM559.90 113.40v-1.1h2.55v1.1ZM563.61 122.93v-1.1h2.55v1.1ZM567.32 125.62v-1.1h2.55v1.1ZM571.04 117.56v-1.1h2.55v1.1ZM574.75 125.62v-1.1h2.55v1.1ZM578.46 130.06v-1.1h2.55v1.1ZM582.17 123.58v-1.1h2.55v1.1ZM585.89 116.64v-1.1h2.55v1.1ZM589.60 118.49v-1.1h2.55v1.1ZM593.31 110.43v-1.1h2.55v1.1ZM597.02 119.69v-1.1h2.55v1.1ZM600.74 118.49v-1.1h2.55v1.1ZM604.45 125.62v-1.1h2.55v1.1ZM608.16 120.80v-1.1h2.55v1.1ZM611.88 119.69v-1.1h2.55v1.1ZM615.59 118.67v-1.1h2.55v1.1ZM619.30 122.66v-1.1h2.55v1.1ZM623.01 113.58v-1.1h2.55v1.1ZM626.73 122.66v-1.1h2.55v1.1ZM630.44 121.73v-1.1h2.55v1.1ZM634.15 123.58v-1.1h2.55v1.1ZM637.86 119.41v-1.1h2.55v1.1ZM641.57 117.10v-1.1h2.55v1.1ZM645.29 116.36v-1.1h2.55v1.1ZM649.00 118.95v-1.1h2.55v1.1ZM652.71 122.47v-1.1h2.55v1.1ZM656.42 125.44v-1.1h2.55v1.1ZM660.14 124.69v-1.1h2.55v1.1ZM663.85 122.66v-1.1h2.55v1.1ZM667.56 119.69v-1.1h2.55v1.1ZM671.27 124.69v-1.1h2.55v1.1ZM674.99 120.34v-1.1h2.55v1.1ZM678.70 113.40v-1.1h2.55v1.1ZM682.41 116.17v-1.1h2.55v1.1ZM686.12 121.73v-1.1h2.55v1.1ZM689.84 132.65v-1.1h2.55v1.1ZM693.55 123.58v-1.1h2.55v1.1ZM697.26 118.95v-1.1h2.55v1.1ZM700.98 124.79v-1.1h2.55v1.1ZM704.69 123.58v-1.1h2.55v1.1ZM708.40 114.51v-1.1h2.55v1.1ZM712.11 123.76v-1.1h2.55v1.1ZM715.82 130.06v-1.1h2.55v1.1ZM719.54 127.56v-1.1h2.55v1.1ZM723.25 116.82v-1.1h2.55v1.1ZM726.96 126.64v-1.1h2.55v1.1ZM730.67 115.43v-1.1h2.55v1.1ZM734.39 127.56v-1.1h2.55v1.1ZM738.10 120.62v-1.1h2.55v1.1ZM741.81 128.68v-1.1h2.55v1.1ZM745.52 117.84v-1.1h2.55v1.1ZM749.24 116.82v-1.1h2.55v1.1ZM752.95 122.66v-1.1h2.55v1.1ZM756.66 119.69v-1.1h2.55v1.1ZM760.38 122.93v-1.1h2.55v1.1ZM764.09 118.49v-1.1h2.55v1.1ZM767.80 113.67v-1.1h2.55v1.1ZM771.51 115.52v-1.1h2.55v1.1ZM775.23 118.49v-1.1h2.55v1.1ZM778.94 123.58v-1.1h2.55v1.1ZM782.65 122.66v-1.1h2.55v1.1ZM786.36 121.26v-1.1h2.55v1.1ZM790.07 112.47v-1.1h2.55v1.1ZM793.79 120.62v-1.1h2.55v1.1ZM797.50 125.44v-1.1h2.55v1.1ZM801.21 114.78v-1.1h2.55v1.1ZM804.92 122.38v-1.1h2.55v1.1ZM808.64 124.51v-1.1h2.55v1.1ZM812.35 124.97v-1.1h2.55v1.1ZM816.06 123.40v-1.1h2.55v1.1ZM819.77 120.34v-1.1h2.55v1.1ZM823.49 126.36v-1.1h2.55v1.1ZM827.20 116.82v-1.1h2.55v1.1ZM830.91 124.51v-1.1h2.55v1.1ZM834.62 123.58v-1.1h2.55v1.1ZM838.34 117.75v-1.1h2.55v1.1ZM842.05 119.69v-1.1h2.55v1.1ZM845.76 117.84v-1.1h2.55v1.1ZM849.48 115.52v-1.1h2.55v1.1ZM853.19 123.58v-1.1h2.55v1.1ZM856.90 111.73v-1.1h2.55v1.1ZM860.61 123.76v-1.1h2.55v1.1ZM864.32 116.64v-1.1h2.55v1.1ZM868.04 112.93v-1.1h2.55v1.1ZM871.75 127.56v-1.1h2.55v1.1ZM875.46 112.01v-1.1h2.55v1.1ZM879.17 130.53v-1.1h2.55v1.1ZM882.89 118.49v-1.1h2.55v1.1ZM886.60 124.51v-1.1h2.55v1.1ZM890.31 122.66v-1.1h2.55v1.1ZM894.02 135.62v-1.1h2.55v1.1ZM897.74 120.62v-1.1h2.55v1.1ZM901.45 134.23v-1.1h2.55v1.1ZM905.16 123.58v-1.1h2.55v1.1ZM908.88 129.60v-1.1h2.55v1.1ZM912.59 118.77v-1.1h2.55v1.1ZM916.30 124.69v-1.1h2.55v1.1ZM920.01 120.80v-1.1h2.55v1.1ZM923.73 127.56v-1.1h2.55v1.1ZM927.44 128.49v-1.1h2.55v1.1ZM931.15 120.80v-1.1h2.55v1.1ZM934.86 124.69v-1.1h2.55v1.1ZM938.57 119.69v-1.1h2.55v1.1ZM942.29 118.95v-1.1h2.55v1.1ZM946.00 113.67v-1.1h2.55v1.1ZM949.71 120.52v-1.1h2.55v1.1ZM953.42 118.49v-1.1h2.55v1.1ZM957.14 119.69v-1.1h2.55v1.1ZM960.85 127.56v-1.1h2.55v1.1ZM964.56 125.44v-1.1h2.55v1.1ZM968.27 120.80v-1.1h2.55v1.1ZM971.99 118.49v-1.1h2.55v1.1ZM975.70 121.55v-1.1h2.55v1.1ZM979.41 127.56v-1.1h2.55v1.1ZM983.12 127.75v-1.1h2.55v1.1ZM986.84 120.62v-1.1h2.55v1.1ZM990.55 122.66v-1.1h2.55v1.1ZM994.26 124.97v-1.1h2.55v1.1ZM997.98 130.53v-1.1h2.55v1.1ZM1001.69 114.51v-1.1h2.55v1.1ZM1005.40 115.52v-1.1h2.55v1.1ZM1009.11 120.80v-1.1h2.55v1.1ZM1012.82 119.41v-1.1h2.55v1.1ZM1016.54 122.66v-1.1h2.55v1.1ZM1020.25 122.66v-1.1h2.55v1.1ZM1023.96 118.95v-1.1h2.55v1.1ZM1027.67 124.69v-1.1h2.55v1.1ZM1031.39 114.51v-1.1h2.55v1.1ZM1035.10 118.67v-1.1h2.55v1.1ZM1038.81 120.34v-1.1h2.55v1.1ZM1042.53 128.49v-1.1h2.55v1.1ZM1046.24 127.75v-1.1h2.55v1.1ZM1049.95 116.64v-1.1h2.55v1.1ZM1053.66 120.62v-1.1h2.55v1.1ZM1057.38 123.58v-1.1h2.55v1.1ZM1061.09 117.56v-1.1h2.55v1.1ZM1064.80 123.58v-1.1h2.55v1.1ZM1068.51 126.64v-1.1h2.55v1.1ZM1072.22 117.56v-1.1h2.55v1.1ZM1075.94 123.40v-1.1h2.55v1.1ZM1079.65 120.52v-1.1h2.55v1.1ZM1083.36 116.45v-1.1h2.55v1.1ZM1087.08 131.45v-1.1h2.55v1.1ZM1090.79 124.51v-1.1h2.55v1.1ZM1094.50 116.45v-1.1h2.55v1.1ZM1098.21 119.60v-1.1h2.55v1.1ZM1101.92 123.58v-1.1h2.55v1.1ZM1105.64 123.58v-1.1h2.55v1.1ZM1109.35 112.75v-1.1h2.55v1.1ZM1113.06 127.56v-1.1h2.55v1.1ZM1116.77 127.56v-1.1h2.55v1.1ZM1120.49 130.80v-1.1h2.55v1.1ZM1124.20 129.60v-1.1h2.55v1.1ZM1127.91 124.32v-1.1h2.55v1.1ZM1131.62 120.80v-1.1h2.55v1.1ZM1135.34 125.62v-1.1h2.55v1.1ZM1139.05 116.64v-1.1h2.55v1.1ZM1142.76 113.21v-1.1h2.55v1.1ZM1146.47 117.56v-1.1h2.55v1.1ZM1150.19 127.56v-1.1h2.55v1.1ZM1153.90 121.73v-1.1h2.55v1.1ZM1157.61 117.56v-1.1h2.55v1.1ZM1161.33 129.60v-1.1h2.55v1.1ZM1165.04 121.55v-1.1h2.55v1.1ZM1168.75 116.17v-1.1h2.55v1.1ZM1172.46 123.58v-1.1h2.55v1.1ZM1176.17 131.45v-1.1h2.55v1.1ZM1179.89 116.64v-1.1h2.55v1.1ZM1183.60 130.06v-1.1h2.55v1.1ZM1187.31 121.73v-1.1h2.55v1.1ZM1191.02 118.49v-1.1h2.55v1.1ZM1194.74 123.58v-1.1h2.55v1.1ZM1198.45 118.49v-1.1h2.55v1.1ZM1202.16 125.90v-1.1h2.55v1.1ZM1205.88 128.49v-1.1h2.55v1.1ZM1209.59 121.73v-1.1h2.55v1.1ZM1213.30 129.79v-1.1h2.55v1.1ZM1217.01 123.58v-1.1h2.55v1.1ZM1220.72 123.58v-1.1h2.55v1.1ZM1224.44 115.52v-1.1h2.55v1.1ZM1228.15 119.60v-1.1h2.55v1.1ZM1231.86 121.55v-1.1h2.55v1.1ZM1235.58 124.69v-1.1h2.55v1.1ZM1239.29 119.69v-1.1h2.55v1.1ZM1243.00 121.55v-1.1h2.55v1.1ZM1246.71 129.88v-1.1h2.55v1.1ZM1250.42 120.06v-1.1h2.55v1.1ZM1254.14 114.51v-1.1h2.55v1.1ZM1257.85 123.58v-1.1h2.55v1.1ZM1261.56 116.82v-1.1h2.55v1.1ZM1265.27 118.49v-1.1h2.55v1.1ZM1268.99 115.43v-1.1h2.55v1.1ZM1272.70 117.56v-1.1h2.55v1.1ZM1276.41 125.90v-1.1h2.55v1.1ZM1280.12 119.60v-1.1h2.55v1.1ZM1283.84 119.88v-1.1h2.55v1.1ZM1287.55 121.26v-1.1h2.55v1.1ZM1291.26 124.69v-1.1h2.55v1.1ZM1294.97 119.14v-1.1h2.55v1.1ZM1298.69 112.66v-1.1h2.55v1.1ZM1302.40 155.58v-1.1h2.55v1.1Z" fill="#e9626e"/>
<line x1="54.0" x2="1305.5" y1="190.5" y2="190.5" stroke="#74668a" stroke-width="1"/>
<line x1="145.4" x2="145.4" y1="190.5" y2="195.5" stroke="#74668a" stroke-width="1"/>
<line x1="234.5" x2="234.5" y1="190.5" y2="195.5" stroke="#74668a" stroke-width="1"/>
<line x1="323.6" x2="323.6" y1="190.5" y2="195.5" stroke="#74668a" stroke-width="1"/>
<line x1="412.7" x2="412.7" y1="190.5" y2="195.5" stroke="#74668a" stroke-width="1"/>
<line x1="501.8" x2="501.8" y1="190.5" y2="195.5" stroke="#74668a" stroke-width="1"/>
<line x1="590.9" x2="590.9" y1="190.5" y2="195.5" stroke="#74668a" stroke-width="1"/>
<line x1="680.0" x2="680.0" y1="190.5" y2="195.5" stroke="#74668a" stroke-width="1"/>
<line x1="769.1" x2="769.1" y1="190.5" y2="195.5" stroke="#74668a" stroke-width="1"/>
<line x1="858.2" x2="858.2" y1="190.5" y2="195.5" stroke="#74668a" stroke-width="1"/>
<line x1="947.3" x2="947.3" y1="190.5" y2="195.5" stroke="#74668a" stroke-width="1"/>
<line x1="1036.4" x2="1036.4" y1="190.5" y2="195.5" stroke="#74668a" stroke-width="1"/>
<line x1="1125.5" x2="1125.5" y1="190.5" y2="195.5" stroke="#74668a" stroke-width="1"/>
<line x1="1214.6" x2="1214.6" y1="190.5" y2="195.5" stroke="#74668a" stroke-width="1"/>
<text x="232.9" y="212.0" text-anchor="middle" font-size="12.6" fill="#80708f">Jul 3</text>
<text x="411.1" y="212.0" text-anchor="middle" font-size="12.6" fill="#80708f">Jul 5</text>
<text x="589.3" y="212.0" text-anchor="middle" font-size="12.6" fill="#80708f">Jul 7</text>
<text x="767.5" y="212.0" text-anchor="middle" font-size="12.6" fill="#80708f">Jul 9</text>
<text x="945.7" y="212.0" text-anchor="middle" font-size="12.6" fill="#80708f">Jul 11</text>
<text x="1123.9" y="212.0" text-anchor="middle" font-size="12.6" fill="#80708f">Jul 13</text>
<circle cx="938.5" cy="29.2" r="3.8" fill="#444674"/>
<text class="lg" x="947.8" y="33.0" font-size="10.6" textLength="48.6" lengthAdjust="spacing" fill="#3e3446">Accepted</text>
<circle cx="1012.5" cy="29.2" r="3.8" fill="#b85586"/>
<text class="lg" x="1021.8" y="33.0" font-size="10.6" textLength="38.5" lengthAdjust="spacing" fill="#3e3446">Filtered</text>
<circle cx="1076.3" cy="29.2" r="3.8" fill="#e9626e"/>
<text class="lg" x="1085.6" y="33.0" font-size="10.6" textLength="64.3" lengthAdjust="spacing" fill="#3e3446">Rate Limited</text>
<circle cx="1166.3" cy="29.2" r="3.8" fill="#f58c46"/>
<text class="lg" x="1175.2" y="33.0" font-size="10.6" textLength="33.2" lengthAdjust="spacing" fill="#3e3446">Invalid</text>
<circle cx="1224.7" cy="29.2" r="3.8" fill="#80708f"/>
<text class="lg" x="1234.0" y="33.0" font-size="10.6" textLength="70.7" lengthAdjust="spacing" fill="#80708f">Client Discard</text>
</svg>
  <div class="abs" style="left:31px;top:532px;width:1334px;height:1px;background:#e0dce5"></div>
  <span class="t sub sb" id="dr1" style="left:51px;top:550px;font-size:15px;font-weight:bold">Date Range:</span>
  <span class="t" id="dr2" style="left:145px;top:550px;font-size:15px">Jul 1 10:00 AM — Jul 15 11:00 AM (+02:00 UTC, 1h interval)</span>
  <span class="t sb" id="ty1" style="left:1219px;top:550px;font-size:15px;font-weight:bold">Type:</span>
  <span class="t" id="ty2" style="left:1261px;top:550px;font-size:15px">Periodic</span>
  <svg class="abs" style="left:1320px;top:554px" width="10" height="7" viewBox="0 0 10 7"><path d="M1 1.2L5 5.2L9 1.2" fill="none" stroke="#2b2233" stroke-width="1.5"/></svg>

  <!-- search -->
  <div class="panel" style="left:30px;top:599px;width:1336px;height:38px;box-shadow:inset 0 1px 2px rgba(43,34,51,.04)">
    <svg class="abs" style="left:16px;top:12px" width="14" height="14" viewBox="0 0 16 16" fill="none" stroke="#80708f" stroke-width="1.5"><circle cx="6.6" cy="6.6" r="5.6"/><path d="M10.8 10.8L15.2 15.2"/></svg>
    <span class="t sub" id="sr" style="left:38px;top:11px;font-size:15px">Filter your projects</span>
  </div>

  <!-- table -->
  <section class="panel" style="left:30px;top:653px;width:1336px;height:300px;border-radius:6px 6px 0 0;overflow:hidden">
    <div class="abs" style="left:0;top:0;width:1334px;height:45px;background:#faf9fb;border-bottom:1px solid #e0dce5"></div>
    <div class="abs" style="left:0;top:103px;width:1334px;height:1px;background:#e0dce5"></div>
    <div class="abs" style="left:0;top:162px;width:1334px;height:1px;background:#e0dce5"></div>
    <div class="abs" style="left:0;top:221px;width:1334px;height:1px;background:#e0dce5"></div>
  </section>
  <span class="th" id="h0" style="left:47px;top:670px">PROJECT</span>
  <span class="th" id="h1" style="right:590px;top:670px">TOTAL</span>
  <svg class="abs" style="left:798px;top:670px" width="10" height="12" viewBox="0 0 10 12" fill="none" stroke="#80708f" stroke-width="1.2"><path d="M5 .5V11M.8 6.8L5 11L9.2 6.8"/></svg>
  <span class="th" id="h2" style="right:481px;top:670px">ACCEPTED</span>
  <span class="th" id="h3" style="right:394px;top:670px">FILTERED</span>
  <span class="th" id="h4" style="right:282px;top:670px">RATE LIMITED</span>
  <span class="th" id="h5" style="right:203px;top:670px">INVALID</span>
  <!-- row react -->
  <svg class="abs" style="left:47px;top:720px" width="16" height="16" viewBox="0 0 16 16"><rect width="16" height="16" rx="3" fill="#2b1735"/><g fill="none" stroke="#41b6dc" stroke-width="1.2"><ellipse cx="8" cy="8" rx="6.4" ry="2.5"/><ellipse cx="8" cy="8" rx="6.4" ry="2.5" transform="rotate(60 8 8)"/><ellipse cx="8" cy="8" rx="6.4" ry="2.5" transform="rotate(120 8 8)"/></g><circle cx="8" cy="8" r="1.3" fill="#a6ccfb"/></svg>
  <a class="t link" id="p0" style="left:69px;top:719px;font-size:15px">react</a>
  <span class="num" id="n1" style="right:576px;top:720px">160K</span>
  <span class="num" id="n2" style="right:481px;top:720px">160K</span>
  <span class="num" id="n3" style="right:394px;top:720px">0</span>
  <span class="num" id="n4" style="right:282px;top:720px">0</span>
  <span class="num" id="n5" style="right:203px;top:720px">0</span>
  <div class="btn" style="left:1214px;top:715px;width:97px"><svg class="abs" style="left:7.6px;top:6px" width="12" height="12" viewBox="0 0 16 16" fill="none" stroke="#2b2233" stroke-width="1.5" stroke-linejoin="round"><rect x=".8" y="11.2" width="4" height="4" rx=".6"/><rect x="5.9" y="6.2" width="4.2" height="9" rx=".6"/><rect x="11.2" y=".8" width="4" height="14.4" rx=".6"/></svg><span class="t vs sb" id="vs1" style="left:27px;top:6px;font-size:13px;font-weight:bold">View Stats</span></div>
  <div class="btn" style="left:1319px;top:715px;width:30px"><svg class="abs" style="left:7.7px;top:6px" width="12" height="12" viewBox="0 0 16 16" fill="none" stroke="#2b2233" stroke-width="1.4" stroke-linejoin="round"><path d="M13.53 6.63 L15.30 6.79 L15.30 9.21 L13.53 9.37 L12.88 10.94 L14.02 12.30 L12.30 14.02 L10.94 12.88 L9.37 13.53 L9.21 15.30 L6.79 15.30 L6.63 13.53 L5.06 12.88 L3.70 14.02 L1.98 12.30 L3.12 10.94 L2.47 9.37 L0.70 9.21 L0.70 6.79 L2.47 6.63 L3.12 5.06 L1.98 3.70 L3.70 1.98 L5.06 3.12 L6.63 2.47 L6.79 0.70 L9.21 0.70 L9.37 2.47 L10.94 3.12 L12.30 1.98 L14.02 3.70 L12.88 5.06 Z"/><circle cx="8" cy="8" r="2.3"/></svg></div>
  <!-- row flask -->
  <svg class="abs" style="left:47px;top:779px" width="16" height="16" viewBox="0 0 16 16"><rect width="16" height="16" rx="3" fill="#43a4c6"/><path d="M1 5.6L3.6 3.5L7.8 3C7.6 6.2 8.8 10.6 14.6 11.5L12.6 12.9L8 12.8C5.4 12 3.4 9.6 3 7.4Z" fill="#fff"/><circle cx="10.4" cy="3.5" r=".5" fill="#2f9e6e"/><circle cx="12.4" cy="2.6" r=".5" fill="#2f9e6e"/><circle cx="12.4" cy="5.6" r=".5" fill="#2f9e6e"/><circle cx="12.4" cy="8.6" r=".5" fill="#2f9e6e"/></svg>
  <a class="t link" id="p1" style="left:69px;top:778px;font-size:15px">flask</a>
  <span class="num" id="n6" style="right:576px;top:779px">94K</span>
  <span class="num" id="n7" style="right:481px;top:779px">94K</span>
  <span class="num" id="n8" style="right:394px;top:779px">0</span>
  <span class="num" id="n9" style="right:282px;top:779px">0</span>
  <span class="num" id="n10" style="right:203px;top:779px">0</span>
  <div class="btn" style="left:1214px;top:774px;width:97px"><svg class="abs" style="left:7.6px;top:6px" width="12" height="12" viewBox="0 0 16 16" fill="none" stroke="#2b2233" stroke-width="1.5" stroke-linejoin="round"><rect x=".8" y="11.2" width="4" height="4" rx=".6"/><rect x="5.9" y="6.2" width="4.2" height="9" rx=".6"/><rect x="11.2" y=".8" width="4" height="14.4" rx=".6"/></svg><span class="t vs sb" id="vs2" style="left:27px;top:6px;font-size:13px;font-weight:bold">View Stats</span></div>
  <div class="btn" style="left:1319px;top:774px;width:30px"><svg class="abs" style="left:7.7px;top:6px" width="12" height="12" viewBox="0 0 16 16" fill="none" stroke="#2b2233" stroke-width="1.4" stroke-linejoin="round"><path d="M13.53 6.63 L15.30 6.79 L15.30 9.21 L13.53 9.37 L12.88 10.94 L14.02 12.30 L12.30 14.02 L10.94 12.88 L9.37 13.53 L9.21 15.30 L6.79 15.30 L6.63 13.53 L5.06 12.88 L3.70 14.02 L1.98 12.30 L3.12 10.94 L2.47 9.37 L0.70 9.21 L0.70 6.79 L2.47 6.63 L3.12 5.06 L1.98 3.70 L3.70 1.98 L5.06 3.12 L6.63 2.47 L6.79 0.70 L9.21 0.70 L9.37 2.47 L10.94 3.12 L12.30 1.98 L14.02 3.70 L12.88 5.06 Z"/><circle cx="8" cy="8" r="2.3"/></svg></div>
  <!-- row empower-tda -->
  <svg class="abs" style="left:47px;top:838px" width="16" height="16" viewBox="0 0 16 16"><rect width="16" height="16" rx="3" fill="#3b9fc4"/><g transform="translate(8 8) scale(1.17) translate(-8 -8)" fill="#fff"><path d="M7.8 2.4C5.6 2.4 5.6 3.4 5.6 4.2V5.4H8V6H4.4C3.2 6 2.6 7 2.6 8.2C2.6 9.4 3.2 10.4 4.4 10.4H5.4V9C5.4 8 6.2 7.2 7.2 7.2H9.4C10.2 7.2 10.6 6.6 10.6 6V4.2C10.6 3 9.6 2.4 7.8 2.4Z"/><path d="M8.2 13.6C10.4 13.6 10.4 12.6 10.4 11.8V10.6H8V10H11.6C12.8 10 13.4 9 13.4 7.8C13.4 6.6 12.8 5.6 11.6 5.6H10.6V7C10.6 8 9.8 8.8 8.8 8.8H6.6C5.8 8.8 5.4 9.4 5.4 10V11.8C5.4 13 6.4 13.6 8.2 13.6Z"/></g></svg>
  <a class="t link" id="p2" style="left:69px;top:837px;font-size:15px">empower-tda</a>
  <span class="num" id="n11" style="right:576px;top:838px">90K</span>
  <span class="num" id="n12" style="right:481px;top:838px">90K</span>
  <span class="num" id="n13" style="right:394px;top:838px">0</span>
  <span class="num" id="n14" style="right:282px;top:838px">0</span>
  <span class="num" id="n15" style="right:203px;top:838px">0</span>
  <div class="btn" style="left:1214px;top:833px;width:97px"><svg class="abs" style="left:7.6px;top:6px" width="12" height="12" viewBox="0 0 16 16" fill="none" stroke="#2b2233" stroke-width="1.5" stroke-linejoin="round"><rect x=".8" y="11.2" width="4" height="4" rx=".6"/><rect x="5.9" y="6.2" width="4.2" height="9" rx=".6"/><rect x="11.2" y=".8" width="4" height="14.4" rx=".6"/></svg><span class="t vs sb" id="vs3" style="left:27px;top:6px;font-size:13px;font-weight:bold">View Stats</span></div>
  <div class="btn" style="left:1319px;top:833px;width:30px"><svg class="abs" style="left:7.7px;top:6px" width="12" height="12" viewBox="0 0 16 16" fill="none" stroke="#2b2233" stroke-width="1.4" stroke-linejoin="round"><path d="M13.53 6.63 L15.30 6.79 L15.30 9.21 L13.53 9.37 L12.88 10.94 L14.02 12.30 L12.30 14.02 L10.94 12.88 L9.37 13.53 L9.21 15.30 L6.79 15.30 L6.63 13.53 L5.06 12.88 L3.70 14.02 L1.98 12.30 L3.12 10.94 L2.47 9.37 L0.70 9.21 L0.70 6.79 L2.47 6.63 L3.12 5.06 L1.98 3.70 L3.70 1.98 L5.06 3.12 L6.63 2.47 L6.79 0.70 L9.21 0.70 L9.37 2.47 L10.94 3.12 L12.30 1.98 L14.02 3.70 L12.88 5.06 Z"/><circle cx="8" cy="8" r="2.3"/></svg></div>
  <!-- row ruby-on-rails -->
  <svg class="abs" style="left:47px;top:897px" width="16" height="16" viewBox="0 0 16 16"><rect width="16" height="16" rx="3" fill="#cc0000"/><path d="M1 12.4L1.2 9.6C1.8 8 2.6 6.8 3.4 5.8C4.6 4.6 5.6 4 6.6 3.7C7.4 3.4 8.2 3.3 8.8 3.3C10 3.4 10.8 3.6 11.6 4C12.8 4.6 13.8 5.4 14.8 6.4L14.5 7.1C13.4 6.3 12.2 5.8 11 5.5C10.2 5.4 9.6 5.4 9 5.7C8.3 6.1 7.8 6.6 7.4 7.3C6.6 8.6 6.2 10 6.2 11.2L6.4 12.4Z" fill="#fff"/></svg>
  <a class="t link" id="p3" style="left:69px;top:896px;font-size:15px">ruby-on-rails</a>
  <span class="num" id="n16" style="right:576px;top:897px">37K</span>
  <span class="num" id="n17" style="right:481px;top:897px">37K</span>
  <span class="num" id="n18" style="right:394px;top:897px">0</span>
  <span class="num" id="n19" style="right:282px;top:897px">0</span>
  <span class="num" id="n20" style="right:203px;top:897px">0</span>
  <div class="btn" style="left:1214px;top:892px;width:97px"><svg class="abs" style="left:7.6px;top:6px" width="12" height="12" viewBox="0 0 16 16" fill="none" stroke="#2b2233" stroke-width="1.5" stroke-linejoin="round"><rect x=".8" y="11.2" width="4" height="4" rx=".6"/><rect x="5.9" y="6.2" width="4.2" height="9" rx=".6"/><rect x="11.2" y=".8" width="4" height="14.4" rx=".6"/></svg><span class="t vs sb" id="vs4" style="left:27px;top:6px;font-size:13px;font-weight:bold">View Stats</span></div>
  <div class="btn" style="left:1319px;top:892px;width:30px"><svg class="abs" style="left:7.7px;top:6px" width="12" height="12" viewBox="0 0 16 16" fill="none" stroke="#2b2233" stroke-width="1.4" stroke-linejoin="round"><path d="M13.53 6.63 L15.30 6.79 L15.30 9.21 L13.53 9.37 L12.88 10.94 L14.02 12.30 L12.30 14.02 L10.94 12.88 L9.37 13.53 L9.21 15.30 L6.79 15.30 L6.63 13.53 L5.06 12.88 L3.70 14.02 L1.98 12.30 L3.12 10.94 L2.47 9.37 L0.70 9.21 L0.70 6.79 L2.47 6.63 L3.12 5.06 L1.98 3.70 L3.70 1.98 L5.06 3.12 L6.63 2.47 L6.79 0.70 L9.21 0.70 L9.37 2.47 L10.94 3.12 L12.30 1.98 L14.02 3.70 L12.88 5.06 Z"/><circle cx="8" cy="8" r="2.3"/></svg></div>
</main>
</body>
</html>
